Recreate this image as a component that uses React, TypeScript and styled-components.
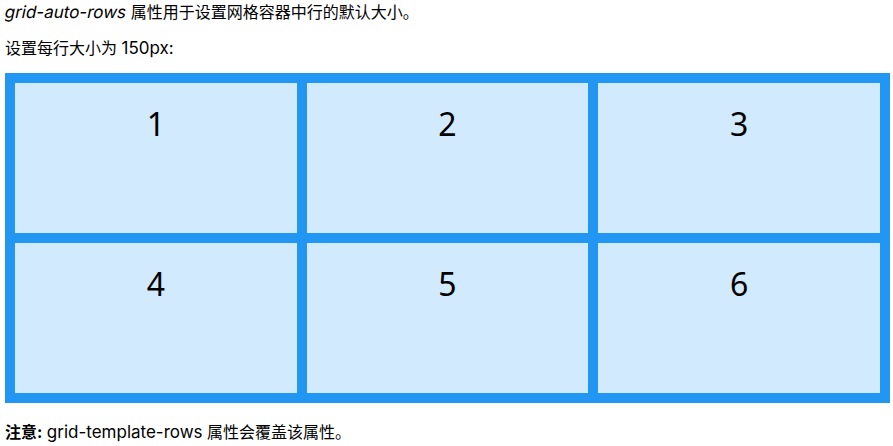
import React from "react";
import styled, { createGlobalStyle } from "styled-components";

const Global = createGlobalStyle`
  html, body { margin: 0; padding: 0; background: #fff; }
  body {
    font-family: "Inter", "Noto Sans CJK SC", sans-serif;
    font-size: 16px;
    color: #000;
  }
`;

const Page = styled.div`
  padding: 0 3px 0 5px;
`;

const Para = styled.p<{ $top: number }>`
  margin: 0;
  line-height: 24px;
  padding-top: ${(p) => p.$top}px;
`;

const Latin = styled.span<{ $italic?: boolean }>`
  font-size: 17px;
  display: inline-block;
  ${(p) => (p.$italic ? "transform: skewX(-12deg);" : "")}
`;

const Grid = styled.div`
  display: grid;
  grid-template-columns: repeat(3, 1fr);
  grid-auto-rows: 150px;
  gap: 10px;
  padding: 10px;
  background: #2196f3;
  margin-top: 13px;
`;

const Cell = styled.div`
  background: rgba(255, 255, 255, 0.8);
  text-align: center;
  font-family: "Noto Sans", sans-serif;
  font-size: 32px;
  line-height: 1.2;
  padding: 22px 0 0;
`;

export default function App() {
  return (
    <Page>
      <Global />
      <Para $top={0}>
        <Latin $italic>grid-auto-rows</Latin> 属性用于设置网格容器中行的默认大小。
      </Para>
      <Para $top={12}>
        设置每行大小为 <Latin>150px:</Latin>
      </Para>
      <Grid>
        {[1, 2, 3, 4, 5, 6].map((n) => (
          <Cell key={n}>{n}</Cell>
        ))}
      </Grid>
      <Para $top={17}>
        <b>注意:</b> <Latin>grid-template-rows</Latin> 属性会覆盖该属性。
      </Para>
    </Page>
  );
}
